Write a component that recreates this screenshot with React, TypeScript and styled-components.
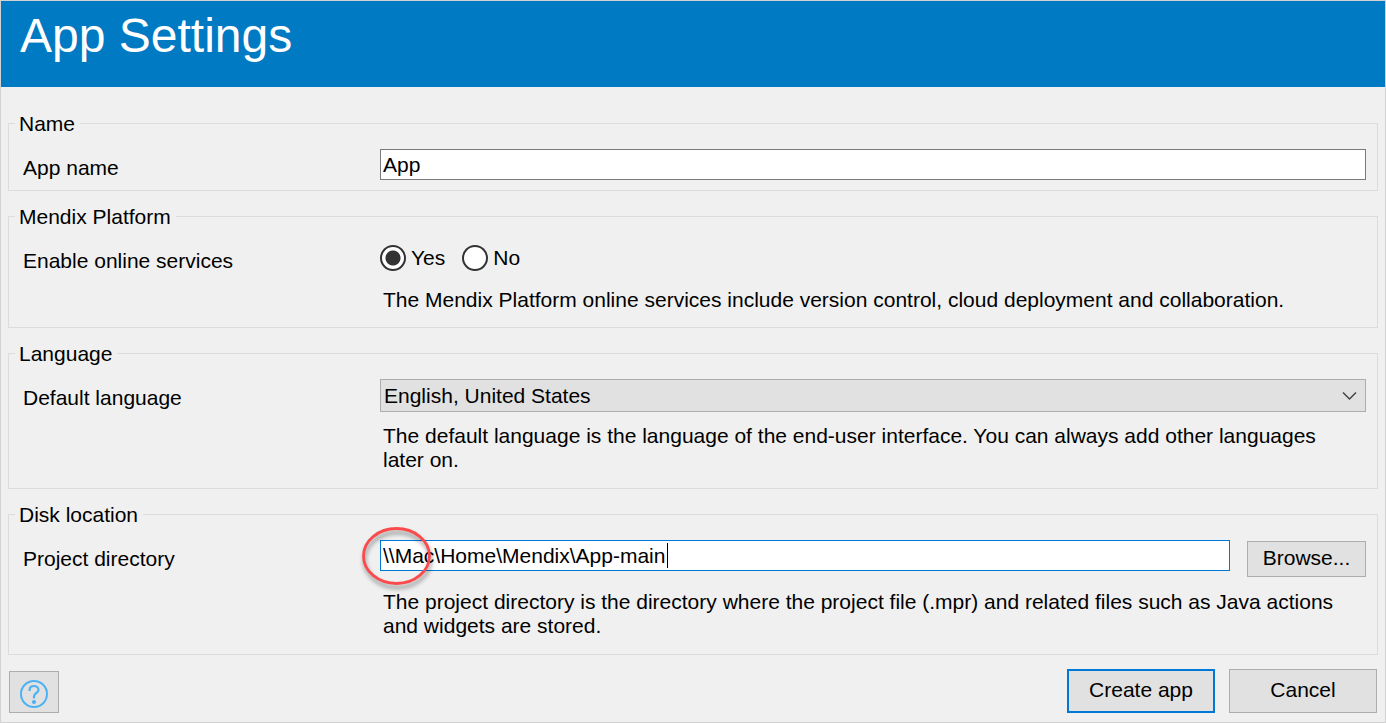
import React, { useState } from "react";
import styled, { createGlobalStyle } from "styled-components";

const GlobalStyle = createGlobalStyle`
  *, *::before, *::after { box-sizing: border-box; }
  body {
    margin: 0;
    background: #f0f0f0;
    color: #000;
    font-family: "Liberation Sans", Arial, sans-serif;
    font-size: 21px;
    line-height: 24px;
  }
  button, input, select { font: inherit; color: inherit; margin: 0; }
`;

const Dialog = styled.form`
  min-height: 100vh;
  border: 1px solid #d2d2d2;
`;

const Header = styled.header`
  height: 86px;
  padding: 7px 19px;
  background: #007ac3;
  color: #fff;
`;

const Title = styled.h1`
  margin: 0;
  font-size: 48px;
  line-height: 56px;
  font-weight: 400;
`;

const Body = styled.main`
  display: flex;
  flex-direction: column;
  gap: 14px;
  padding: 25px 7px 9px;
`;

const Group = styled.fieldset`
  display: grid;
  grid-template-columns: 357px minmax(0, 1fr);
  min-width: 0;
  margin: 0;
  padding: 14px 11px 10px 14px;
  border: 1px solid #dcdcdc;
`;

const Legend = styled.legend`
  height: 23px;
  margin-left: -8px;
  padding: 0 5px 0 4px;
`;

const RowLabel = styled.label`
  align-self: start;
  padding-top: 7px;
`;

const Field = styled.div`
  position: relative;
  display: flex;
  align-items: flex-start;
  gap: 17px;
`;

const TextBox = styled.input<{ $active?: boolean }>`
  flex: 1;
  min-width: 0;
  height: 31px;
  padding: 0 2px;
  border: 1px solid ${(p) => (p.$active ? "#0078d7" : "#7a7a7a")};
  border-radius: 0;
  background: #fff;
  outline: none;
`;

const Radios = styled.div`
  display: flex;
  align-items: center;
  height: 31px;
  gap: 17px;
`;

const RadioLabel = styled.label`
  display: flex;
  align-items: center;
  gap: 5px;
`;

const Radio = styled.input`
  appearance: none;
  width: 26px;
  height: 26px;
  border: 2px solid #333;
  border-radius: 50%;
  background: #fff;
  &:checked {
    background: radial-gradient(circle, #333 7px, #fff 8px);
  }
`;

const Select = styled.select`
  appearance: none;
  width: 100%;
  height: 33px;
  padding: 0 32px 0 3px;
  border: 1px solid #adadad;
  border-radius: 0;
  background: #e1e1e1;
`;

const Chevron = styled.svg`
  position: absolute;
  right: 9px;
  top: 12px;
  pointer-events: none;
`;

const Hint = styled.p<{ $gap: number; $end: number }>`
  grid-column: 2;
  margin: ${(p) => p.$gap}px 0 ${(p) => p.$end}px;
  padding: 0 8px 0 3px;
`;

const Button = styled.button<{ $primary?: boolean }>`
  width: 148px;
  height: 44px;
  padding: 0 0 2px;
  border: ${(p) => (p.$primary ? "2px solid #0078d7" : "1px solid #adadad")};
  border-radius: 0;
  background: #e1e1e1;
`;

const BrowseButton = styled(Button)`
  width: 119px;
  height: 36px;
  margin-top: 1px;
`;

const HelpButton = styled(Button)`
  display: grid;
  place-items: center;
  width: 50px;
  height: 42px;
  margin-right: auto;
  padding: 4px 0 0;
`;

const Footer = styled.footer`
  display: flex;
  align-items: flex-end;
  gap: 14px;
  padding: 0 1px;
`;

const Caret = styled.span`
  position: absolute;
  left: 287px;
  top: 3px;
  width: 1px;
  height: 25px;
  background: #000;
`;

const Highlight = styled.svg`
  position: absolute;
  left: -24px;
  top: -19px;
  overflow: visible;
  pointer-events: none;
  filter: drop-shadow(1px 4px 2px rgba(0, 0, 0, 0.4));
`;

export default function App() {
  const [name, setName] = useState("App");
  const [online, setOnline] = useState(true);
  const [directory, setDirectory] = useState("\\\\Mac\\Home\\Mendix\\App-main");

  return (
    <>
      <GlobalStyle />
      <Dialog onSubmit={(e) => e.preventDefault()}>
        <Header>
          <Title>App Settings</Title>
        </Header>
        <Body>
          <Group>
            <Legend>Name</Legend>
            <RowLabel htmlFor="name">App name</RowLabel>
            <Field>
              <TextBox id="name" value={name} onChange={(e) => setName(e.target.value)} />
            </Field>
          </Group>

          <Group>
            <Legend>Mendix Platform</Legend>
            <RowLabel as="span" id="online">Enable online services</RowLabel>
            <Radios role="radiogroup" aria-labelledby="online">
              <RadioLabel>
                <Radio type="radio" name="online" checked={online} onChange={() => setOnline(true)} />
                Yes
              </RadioLabel>
              <RadioLabel>
                <Radio type="radio" name="online" checked={!online} onChange={() => setOnline(false)} />
                No
              </RadioLabel>
            </Radios>
            <Hint $gap={15} $end={5}>
              The Mendix Platform online services include version control, cloud deployment and collaboration.
            </Hint>
          </Group>

          <Group>
            <Legend>Language</Legend>
            <RowLabel htmlFor="language">Default language</RowLabel>
            <Field>
              <Select id="language">
                <option>English, United States</option>
              </Select>
              <Chevron width="16" height="10" viewBox="0 0 16 10" aria-hidden="true">
                <path d="M2 1.500 L8.500 8 L15 1.500" fill="none" stroke="#444" strokeWidth="1.500" />
              </Chevron>
            </Field>
            <Hint $gap={12} $end={6}>
              The default language is the language of the end-user interface. You can always add other languages
              later on.
            </Hint>
          </Group>

          <Group>
            <Legend>Disk location</Legend>
            <RowLabel htmlFor="directory">Project directory</RowLabel>
            <Field>
              <TextBox
                id="directory"
                $active
                value={directory}
                onChange={(e) => setDirectory(e.target.value)}
              />
              <BrowseButton type="button">Browse...</BrowseButton>
              <Caret />
              <Highlight width="80" height="70" viewBox="0 0 80 70" aria-hidden="true">
                <ellipse cx="40.500" cy="35" rx="33" ry="27.500" fill="none" stroke="#fb4a4c" strokeWidth="2.800" />
              </Highlight>
            </Field>
            <Hint $gap={13} $end={6}>
              The project directory is the directory where the project file (.mpr) and related files such as Java
              actions and widgets are stored.
            </Hint>
          </Group>

          <Footer>
            <HelpButton type="button" aria-label="Help">
              <svg width="30" height="30" viewBox="0 0 30 30" fill="none" stroke="#4db2f5" aria-hidden="true">
                <circle cx="15" cy="15" r="13" strokeWidth="2" />
                <path d="M10.600 12 V11 C10.600 8.300 12.500 7 15 7 C17.500 7 19.500 8.500 19.500 10.900 C19.500 14.200 15 13.800 15 17.500 V19.500" strokeWidth="2.200" />
                <circle cx="15" cy="23" r="2.100" fill="#4db2f5" stroke="none" />
              </svg>
            </HelpButton>
            <Button type="submit" $primary>Create app</Button>
            <Button type="button">Cancel</Button>
          </Footer>
        </Body>
      </Dialog>
    </>
  );
}
